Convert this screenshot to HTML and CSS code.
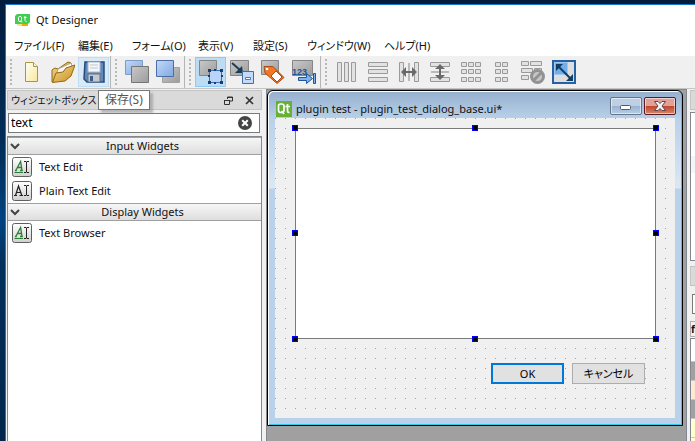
FILE: index.html
```html
<!DOCTYPE html>
<html lang="ja">
<head>
<meta charset="utf-8">
<title>Qt Designer</title>
<link rel="stylesheet" href="styles.css">
</head>
<body>
<svg class="defs" aria-hidden="true">
  <defs>
    <linearGradient id="steel" x1="0" y1="0" x2="1" y2="1"><stop offset="0" stop-color="#c9c9c9"/><stop offset="1" stop-color="#9c9c9c"/></linearGradient>
    <linearGradient id="sky" x1="0" y1="0" x2="1" y2="1"><stop offset="0" stop-color="#c3d8f6"/><stop offset="1" stop-color="#7fa9e4"/></linearGradient>
    <linearGradient id="gold" x1="0" y1="0" x2="1" y2="1"><stop offset="0" stop-color="#f4d98b"/><stop offset="1" stop-color="#c98f22"/></linearGradient>
    <linearGradient id="page" x1="0" y1="0" x2="1" y2="1"><stop offset="0" stop-color="#fffef4"/><stop offset="1" stop-color="#f7e89c"/></linearGradient>
    <linearGradient id="rich" x1="0" y1="0" x2="0" y2="1"><stop offset="0" stop-color="#ffffff"/><stop offset="1" stop-color="#cfcfcf"/></linearGradient>
    <symbol id="a-green" viewBox="0 0 20 20">
      <rect x=".5" y=".5" width="19" height="19" rx="2" fill="url(#rich)" stroke="#5f5f5f"/>
      <path d="M3 13.500h1.800M8 13.500h2.800M3.800 13.500 8.600 4.500 10 13.500M5.500 10.500h4" fill="none" stroke="#2c7d36" stroke-width="1.300"/>
      <path d="M2.500 15.500h8.500" stroke="#2c7d36"/>
      <path d="M12 4.500h2l.5.500.5-.5h2M14.500 5v10M12 15.500h2l.5-.5.5.5h2" fill="none" stroke="#222"/>
    </symbol>
    <symbol id="a-black" viewBox="0 0 20 20">
      <rect x=".5" y=".5" width="19" height="19" rx="2" fill="url(#rich)" stroke="#5f5f5f"/>
      <path d="M2 14.500h3M7.500 14.500H11M3.500 14.500 6.500 5l3.300 9.500M4.500 11.500h4" fill="none" stroke="#222" stroke-width="1.200"/>
      <path d="M12 4.500h2l.5.500.5-.5h2M14.500 5v9M12 14.500h2l.5-.5.5.5h2" fill="none" stroke="#222"/>
    </symbol>
  </defs>
</svg>
<div class="app">
  <header class="titlebar">
    <svg class="app-icon" viewBox="0 0 15 13" aria-hidden="true">
      <path d="M2 0h13v8l-2 2H0V2z" fill="#41cd52"/>
      <path d="M4.200 2.500h1.600l.7.800v3.400l-.7.800H4.200l-.7-.8V3.300zM5.300 6.500 7 8.500M10 2v4.500l.8 1h.7M8.800 3.500h2.700" fill="none" stroke="#fff"/>
      <path d="M2 10h11v2H4z" fill="#f2a900"/><path d="M2 10h5v2H4z" fill="#f8dc8a"/>
    </svg>
    <h1>Qt Designer</h1>
  </header>
  <nav class="menubar">
    <a href="#">ファイル(F)</a><a href="#">編集(E)</a><a href="#">フォーム(O)</a><a href="#">表示(V)</a><a href="#">設定(S)</a><a href="#">ウィンドウ(W)</a><a href="#">ヘルプ(H)</a>
  </nav>
  <div class="toolbar">
    <div class="group">
      <button aria-label="新規"><svg viewBox="0 0 24 24"><path d="M5.500 2.500h8l4 4v15h-12z" fill="url(#page)" stroke="#a8954c"/><path d="M13.500 2.500v4h4" fill="#fff7cf" stroke="#a8954c"/></svg></button>
      <button aria-label="開く"><svg viewBox="0 0 24 24"><path d="M1 22V10l3-2 3 1 10-7 3 1v9z" fill="url(#gold)" stroke="#91681a"/><path d="M5 17 7 9 20 3l1 3-8 12z" fill="#faf7eb" stroke="#b0a68a"/><path d="M1.500 22.500 5 13l7-1 3-4 9-3-4 11-6 5z" fill="url(#gold)" stroke="#91681a"/></svg></button>
      <button class="hover" aria-label="保存"><svg viewBox="0 0 24 24"><path d="M3 2h19v20H5l-3-3z" fill="#6189bb" stroke="#244b7c" stroke-width="1.500"/><rect x="6" y="2" width="12" height="10" fill="#f5f7fa" stroke="#b0bac7"/><path d="M8 5h8M8 8h8" stroke="#bfc5cc"/><rect x="6" y="14" width="12" height="8" fill="#c5c8cc" stroke="#66727f"/><rect x="8" y="16" width="3" height="5" fill="#385d8e"/></svg></button>
    </div>
    <div class="group">
      <button aria-label="背面へ"><svg viewBox="0 0 24 24"><path d="M.5.500h17v14H.5z" fill="url(#sky)" stroke="#7c9bc5"/><path d="M6.500 6.500h17v16h-17z" fill="url(#steel)" stroke="#757575"/></svg></button>
      <button aria-label="前面へ"><svg viewBox="0 0 24 24"><path d="M6.500 7.500h17v15h-17z" fill="url(#steel)" stroke="#a1a1a1"/><path d="M.5.500h17v16H.5z" fill="url(#sky)" stroke="#4a6ea5"/></svg></button>
    </div>
    <div class="group">
      <button class="checked" aria-label="ウィジェットを編集"><svg viewBox="0 0 24 24"><path d="M.5.500h17v15H.5z" fill="url(#steel)" stroke="#858585"/><path d="M10.500 10.500h12v12h-12z" fill="#b9d4f8" stroke="#3e6fb4"/><path d="M9 9h3v3H9zM15 9h2v2h-2zM21 9h3v3h-3zM9 15h2v2H9zM22 15h2v2h-2zM9 21h3v3H9zM15 22h2v2h-2zM21 21h3v3h-3z" fill="#1b3d6e"/></svg></button>
      <button aria-label="シグナル/スロットを編集"><svg viewBox="0 0 24 24"><path d="M.5.500h18v15H.5z" fill="url(#steel)" stroke="#858585"/><path d="m2 3 8 7" stroke="#193e56" stroke-width="2"/><path d="M13 13H5l7-7z" fill="#193e56"/><path d="M12.500 11.500h11v12h-11z" fill="#c4dafa" stroke="#426da9"/><path d="M15.500 17.500h5v2h-5z" fill="#fff" stroke="#487bbe"/></svg></button>
      <button aria-label="バディを編集"><svg viewBox="0 0 24 24"><path d="M.5.500h17v14H.5z" fill="url(#steel)" stroke="#858585"/><path d="M3 6.500h9l11 11-7 6L4 13z" fill="#f17724" stroke="#a84d15"/><path d="m15 11 6 6-5 5-6-6z" fill="#fff" stroke="#a84d15"/><circle cx="6" cy="9" r="1.300" fill="#fff"/></svg></button>
      <button aria-label="タブ順序を編集"><svg viewBox="0 0 24 24"><path d="M.5.500h20v15H.5z" fill="url(#steel)" stroke="#858585"/><text class="digits" x="0" y="15">123</text><path d="M6.500 17.500h8v-4l6 5-6 5v-3h-8zM21.500 13.500h2v10h-2z" fill="#7fb2ed" stroke="#1f5599"/></svg></button>
    </div>
    <div class="group layouts">
      <button aria-label="水平に並べる"><svg viewBox="0 0 24 24"><path d="M2.500 2.500h4v19h-4zM9.500 2.500h4v19h-4zM16.500 2.500h4v19h-4z"/></svg></button>
      <button aria-label="垂直に並べる"><svg viewBox="0 0 24 24"><path d="M2.500 2.500h19v4h-19zM2.500 9.500h19v4h-19zM2.500 17.500h19v4h-19z"/></svg></button>
      <button aria-label="スプリッタで水平に並べる"><svg viewBox="0 0 24 24"><path d="M2.500 2.500h4v19h-4zM17.500 2.500h4v19h-4z"/><path class="rule" d="M12 3v18"/><path class="dark" d="m4 12 5-5v4h6V7l5 5-5 5v-4H9v4z"/></svg></button>
      <button aria-label="スプリッタで垂直に並べる"><svg viewBox="0 0 24 24"><path d="M2.500 2.500h19v4h-19zM2.500 17.500h19v4h-19z"/><path class="rule" d="M3 12h18"/><path class="dark" d="m12 4 5 5h-4v6h4l-5 5-5-5h4V9H7z"/></svg></button>
      <button aria-label="格子状に並べる"><svg viewBox="0 0 24 24"><path d="M2.500 2.500h5v4h-5zM9.500 2.500h5v4h-5zM16.500 2.500h5v4h-5zM2.500 9.500h5v4h-5zM9.500 9.500h5v4h-5zM16.500 9.500h5v4h-5zM2.500 17.500h5v4h-5zM9.500 17.500h5v4h-5zM16.500 17.500h5v4h-5z"/></svg></button>
      <button aria-label="フォームレイアウト"><svg viewBox="0 0 24 24"><path d="M5.500 2.500h5v4h-5zM12.500 2.500h5v4h-5zM5.500 9.500h5v4h-5zM12.500 9.500h5v4h-5zM5.500 17.500h5v4h-5zM12.500 17.500h5v4h-5z"/></svg></button>
      <button aria-label="レイアウト解除"><svg viewBox="0 0 24 24"><path d="M.5 1.500h7v4h-7zM9.500 1.500h11v4h-11zM.5 8.500h11v4H.5zM13.500 8.500h7v4h-7zM.5 15.500h7v4h-7z"/><circle class="ban" cx="16.500" cy="16.500" r="6"/><path class="ban" d="m12.500 20.500 8-8"/></svg></button>
      <button aria-label="サイズ調整"><svg viewBox="0 0 24 24"><rect class="adj-frame" x="1" y="1" width="22" height="22"/><path class="adj-fill" d="M2.500 2.500h13v12h-13z"/><path class="adj-line" d="m6 6 12 12"/><path class="adj-tip" d="M4 4h7l-7 7zM21 21h-7l7-7z"/></svg></button>
    </div>
  </div>
  <main class="workspace">
    <aside class="dock">
      <div class="dock-title">
        <h2>ウィジェットボックス</h2>
        <button aria-label="フロート"><svg viewBox="0 0 9 9"><path d="M3.500 3V1h5v4H6M3 1.500h6M.5 4.500h5v4h-5zM0 4.500h6" fill="none" stroke="#333"/></svg></button>
        <button aria-label="閉じる"><svg viewBox="0 0 9 9"><path d="m1 1 7 7M8 1 1 8" stroke="#333" stroke-width="1.700"/></svg></button>
        <div class="tooltip" role="tooltip">保存(S)</div>
      </div>
      <div class="search">
        <input type="text" value="text" aria-label="フィルタ">
        <button aria-label="クリア"><svg viewBox="0 0 14 14"><circle cx="7" cy="7" r="7" fill="#444"/><path d="m4.200 4.200 5.600 5.600M9.800 4.200 4.200 9.800" stroke="#fff" stroke-width="2"/></svg></button>
      </div>
      <div class="tree">
        <h3><svg viewBox="0 0 10 7"><path d="m1 1 4 4 4-4" fill="none" stroke="#444" stroke-width="2"/></svg><span>Input Widgets</span></h3>
        <ul>
          <li><svg><use href="#a-green"/></svg>Text Edit</li>
          <li><svg><use href="#a-black"/></svg>Plain Text Edit</li>
        </ul>
        <h3><svg viewBox="0 0 10 7"><path d="m1 1 4 4 4-4" fill="none" stroke="#444" stroke-width="2"/></svg><span>Display Widgets</span></h3>
        <ul>
          <li><svg><use href="#a-green"/></svg>Text Browser</li>
        </ul>
      </div>
    </aside>
    <section class="mdi">
      <div class="form-window">
        <div class="form-title">
          <svg class="qt" viewBox="0 0 16 16" aria-hidden="true"><rect width="16" height="16" fill="#66b036"/><path d="M4.500 3h1Q8 3 8 5v4q0 2.500-2.500 2.500h-1Q2.500 11.500 2.500 9V5q0-2 2-2zM5.500 10 8 13M11.500 3v7q0 1.500 2 1.500M9.500 5.500H14" fill="none" stroke="#fff" stroke-width="1.700"/></svg>
          <h2>plugin test - plugin_test_dialog_base.ui*</h2>
          <button class="min" aria-label="最小化"><svg viewBox="0 0 12 6"><rect x=".5" y=".5" width="10" height="4" rx="1" fill="#fff" stroke="#555b66"/></svg></button>
          <button class="close" aria-label="閉じる"><svg viewBox="0 0 12 10"><path d="M.5.500h3.500L6 2.500 8 .5h3.500L8 5l3.500 4.500H8L6 7.500 4 9.500H.5L4 5z" fill="#f4f4f4" stroke="#5a4650"/></svg></button>
        </div>
        <form class="canvas" onsubmit="return false">
          <div class="edit">
            <textarea aria-label="テキスト"></textarea>
            <i class="h nw"></i><i class="h n"></i><i class="h ne"></i><i class="h w"></i><i class="h e"></i><i class="h sw"></i><i class="h s"></i><i class="h se"></i>
          </div>
          <div class="actions"><button class="ok">OK</button><button>キャンセル</button></div>
        </form>
      </div>
    </section>
    <aside class="side">
      <div class="side-title"></div>
      <div class="side-list"></div>
      <div class="side-title second"></div>
      <div class="side-filter"></div>
      <div class="side-class">f</div>
      <div class="side-props"><i></i><i class="grp"></i><i class="peach"></i><i class="grp"></i><i class="yellow"></i><i class="yellow"></i></div>
    </aside>
  </main>
</div>
</body>
</html>
```
FILE: styles.css
```css
* { box-sizing: border-box; }
html, body { height: 100%; margin: 0; }
body {
  padding: 4px 0 0 5px;
  overflow: hidden;
  background: linear-gradient(#031c3c, #022f5c 35%, #004280 50%, #02305c 60%, #02264c);
  font: 11px/16px "Noto Sans", "Noto Sans CJK JP", sans-serif;
  color: #111;
}
h1, h2, h3, ul { margin: 0; padding: 0; font: inherit; list-style: none; }
button { margin: 0; padding: 0; border: 0; background: none; font: inherit; color: inherit; }
svg { display: block; }
.defs { position: absolute; width: 0; height: 0; }

.app {
  display: flex;
  flex-direction: column;
  height: 100%;
  background: #f0f0f0;
  border: solid #1976c8;
  border-width: 1px 0 0 1px;
}
.titlebar { display: flex; align-items: center; gap: 6px; height: 30px; padding-left: 9px; background: #fff; }
.app-icon { width: 15px; height: 13px; }

.menubar {
  display: grid;
  grid-template-columns: 64px 54px 66px 55px 54px 77px auto;
  height: 21px;
  padding-left: 8px;
  background: #fff;
  line-height: 21px;
  font-feature-settings: "palt";
}
.menubar a { color: inherit; text-decoration: none; white-space: nowrap; }

.toolbar { display: flex; height: 33px; border-bottom: 1px solid #c4c4c4; }
.group { display: flex; align-items: center; height: 32px; padding-right: 1px; border-right: 1px solid #b5b5b5; }
.group:last-child { border: 0; }
.group::before {
  content: "";
  width: 2px;
  height: 26px;
  margin: 0 4px;
  background: repeating-linear-gradient(#b8b8b8 0 2px, transparent 2px 4px);
}
.group button { display: grid; place-items: center; width: 31px; height: 30px; }
.group svg { width: 24px; height: 24px; }
.group .hover { background: #d8e9f8; border: 1px solid #c0dcf3; }
.group .checked { background: #bcdcf4; border: 1px solid #90c8f6; }
.digits { font: bold 9px "Liberation Sans", sans-serif; fill: #1f5599; }
.layouts path { fill: #e2e2e2; stroke: #9a9a9a; }
.layouts .dark { fill: #6a6a6a; stroke: none; }
.layouts .rule { stroke: #858585; }
.layouts .ban { fill: none; stroke: #929292; stroke-width: 3; }
.layouts circle.ban { fill: #c6c6c6; }
.adj-frame { fill: #dedede; stroke: #2461a5; stroke-width: 2; }
.layouts .adj-fill { fill: #71aeea; stroke: #9fc9ef; }
.layouts .adj-line { stroke: #123e63; stroke-width: 2; }
.layouts .adj-tip { fill: #123e63; stroke: none; }

.workspace {
  display: grid;
  grid-template-columns: 256px minmax(0, 1fr) 8px;
  flex: 1;
  min-height: 0;
}
.dock { display: flex; flex-direction: column; padding: 1px 0 0 1px; }
.dock-title {
  position: relative;
  display: flex;
  align-items: center;
  gap: 12px;
  height: 20px;
  padding: 0 7px 0 3px;
  background: #dadada;
  border: 1px solid #c4c4c4;
}
.dock-title h2 { flex: 1; white-space: nowrap; font-feature-settings: "palt"; font-size: 10px; }
.dock-title svg { width: 9px; height: 9px; }
.tooltip {
  position: absolute;
  left: 90px;
  top: -1px;
  padding: 1px 6px;
  background: #fff;
  border: 1px solid #767676;
  box-shadow: 3px 3px 2px #8888;
  color: #575757;
  font-size: 12px;
  white-space: nowrap;
}
.search { display: flex; align-items: center; height: 20px; margin: 3px 2px 3px 1px; padding-right: 7px; background: #fff; border: 1px solid #7a7a7a; }
.search input { flex: 1; min-width: 0; padding: 0 2px; border: 0; outline: 0; background: none; font: inherit; font-size: 12px; color: #000; }
.search svg { width: 14px; height: 14px; }
.tree { flex: 1; background: #fff; border: solid #828790; border-width: 1px 1px 0; }
.tree h3 {
  display: grid;
  grid-template-columns: 14px 1fr;
  align-items: center;
  height: 18px;
  padding-left: 2px;
  background: linear-gradient(#f6f6f6, #dedede);
  border: solid #a0a0a0;
  border-width: 1px 0;
  text-align: center;
}
.tree h3 svg { width: 10px; height: 7px; }
.tree li { display: flex; align-items: center; gap: 7px; height: 24px; padding-left: 4px; }
.tree li svg { width: 20px; height: 20px; }

.mdi { margin-left: 4px; padding-right: 3px; background: #a0a0a0; border: solid #828790; border-width: 1px; border-bottom: 0; }
.form-window {
  display: flex;
  flex-direction: column;
  padding: 0 6px 7px;
  background: linear-gradient(#95afce, #b9d1ea 28px, #dbe7f4 97px, #b9d1ea 98px);
  border: 1px solid #000;
  border-radius: 6px 6px 0 0;
  box-shadow: inset 1px 1px #fff, inset -1px -1px #35cbe8;
}
.form-title { display: flex; align-items: flex-end; height: 27px; padding: 0 0 1px 2px; }
.form-title .qt { width: 16px; height: 16px; margin-right: 4px; }
.form-title h2 { flex: 1; min-width: 0; white-space: nowrap; }
.form-title button { display: grid; place-items: center; width: 32px; height: 18px; margin: 0 0 2px 2px; border-radius: 2px; box-shadow: inset 0 0 0 1px #fff8; }
.min { border: 1px solid #64758b; background: linear-gradient(#bed0e3 50%, #98b2cf 50%, #b7cee6); }
.min svg { width: 12px; height: 6px; margin-top: 4px; }
.form-title .min { border: 1px solid #64758b; background: linear-gradient(#bed0e3 50%, #98b2cf 50%, #b7cee6); }
.form-title .close { border: 1px solid #5a1a24; background: linear-gradient(#e3a096 50%, #bd4429 50%, #d98769); }
.close svg { width: 12px; height: 10px; }
.canvas {
  height: 300px;
  margin: 0 1px;
  padding: 10px 19px 0 20px;
  background: #f0f0f0 conic-gradient(from 270deg at 1px 1px, #a0a0a0 90deg, transparent 0) 0 0 / 10px 10px;
}
.edit { position: relative; height: 211px; }
.edit textarea { display: block; width: 100%; height: 100%; padding: 4px; border: 1px solid #7a7a7a; background: #fff; resize: none; outline: 0; }
.h { position: absolute; width: 6px; height: 6px; background: #000; border: 1px solid #00f; }
.nw, .n, .ne { top: -3px; }
.w, .e { top: calc(50% - 4px); }
.sw, .s, .se { bottom: -3px; }
.nw, .w, .sw { left: -3px; }
.n, .s { left: calc(50% - 4px); }
.ne, .e, .se { right: -3px; }
.actions { display: flex; justify-content: flex-end; gap: 8px; padding: 24px 11px 0 0; }
.actions button { width: 73px; height: 21px; background: #e1e1e1; border: 1px solid #adadad; color: #000; font-feature-settings: "palt"; }
.actions .ok { border: 2px solid #0078d7; }

.side { padding: 1px 0 0 3px; overflow: hidden; }
.side-title { height: 20px; background: #dadada; border: solid #c4c4c4; border-width: 1px 0 1px 1px; }
.side-list { height: 149px; margin-top: 2px; background: linear-gradient(#fff 43px, #f5f5f5 43px 60px, #fff 60px); border: solid #828790; border-width: 1px 0 1px 1px; }
.second { margin-top: 5px; }
.side-filter { height: 20px; margin: 8px 0 7px 2px; background: #fff; border: solid #7a7a7a; border-width: 1px 0 1px 1px; }
.side-class { height: 16px; border: solid #b0b0b0; border-width: 1px 0 1px 1px; font-size: 10px; font-weight: bold; line-height: 14px; }
.side-props { margin-top: 1px; border: solid #828790; border-width: 1px 0 0 1px; }
.side-props i { display: block; height: 19px; background: #fff; border-bottom: 1px solid #c8c8c8; }
.side-props i:first-child { height: 23px; }
.side-props .grp { background: #a0a0a0; }
.side-props .peach { background: #ffe9d5; }
.side-props .yellow { background: #ffffd0; }
```
